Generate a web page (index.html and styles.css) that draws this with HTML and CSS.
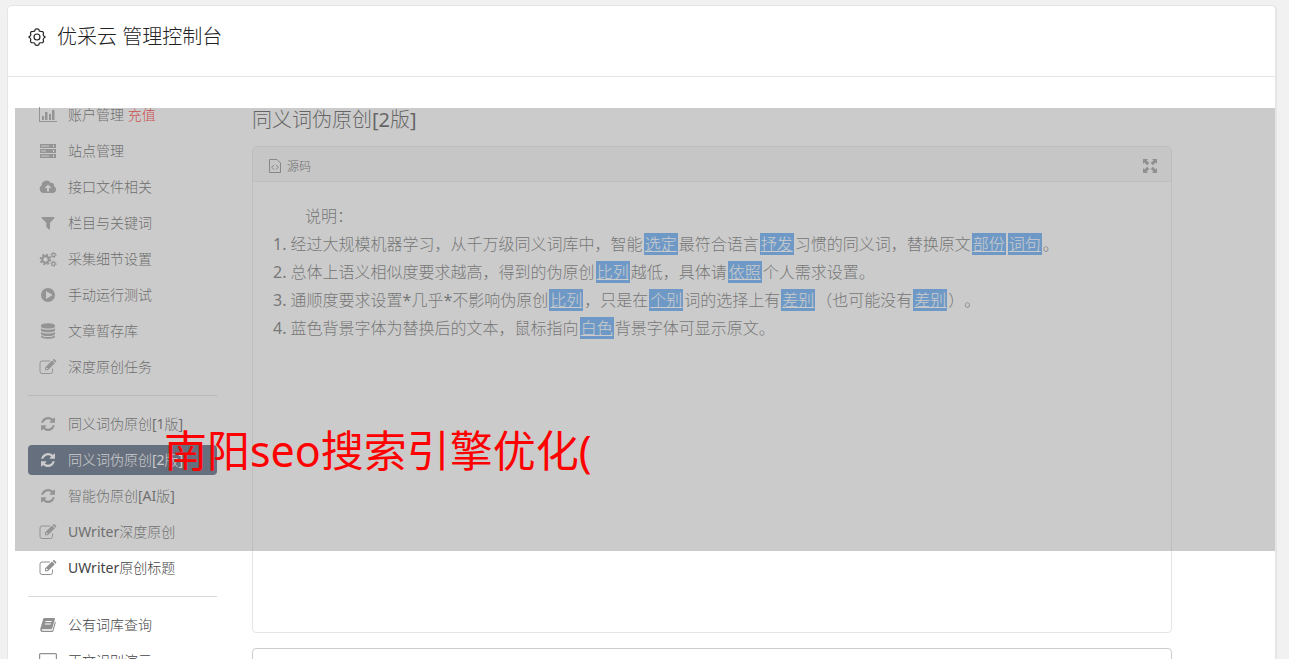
FILE: index.html
```
<!DOCTYPE html>
<html lang="zh-CN">
<head>
    <meta charset="UTF-8">
    <meta name="viewport" content="width=device-width, initial-scale=1.0">
    <title>优采云 管理控制台</title>
    <link rel="stylesheet" href="styles.css">
</head>
<body>

    <!-- 图标 -->
    <svg class="sprite" aria-hidden="true">
        <symbol id="i-refresh" viewBox="0 0 1536 1536">
            <path d="M1511 928q0 5-1 7-64 268-268 434.500T764 1536q-146 0-282.500-55T238 1324l-129 129q-19 19-45 19t-45-19-19-45V960q0-26 19-45t45-19h448q26 0 45 19t19 45-19 45l-137 137q71 66 161 102t187 36q134 0 250-65t186-179q11-17 53-117 8-23 30-23h192q13 0 22.500 9.500t9.500 22.500zm25-800v448q0 26-19 45t-45 19h-448q-26 0-45-19t-19-45 19-45l138-138Q969 256 768 256q-134 0-250 65T332 500q-11 17-53 117-8 23-30 23H50q-13 0-22.500-9.500T18 608v-7q65-268 270-434.500T768 0q146 0 284 55.500T1297 212l130-129q19-19 45-19t45 19 19 45z"/>
        </symbol>
        <symbol id="i-edit" viewBox="0 0 18 16">
            <path d="M13.500 9.500v3a2 2 0 0 1-2 2h-8.500a2 2 0 0 1-2-2v-8.500a2 2 0 0 1 2-2H11" fill="none" stroke="currentColor"/>
            <path fill-rule="evenodd" d="M6 8.500 13 1.500l2.800 2.800-7 7H6zM7 9v1.200h1.300l.6-.6L7.500 8.500zM13.700.9l.6-.6q.6-.6 1.200 0l1.500 1.500q.6.600 0 1.200l-.6.700z"/>
        </symbol>
    </svg>

    <div class="panel">
        <header class="panel-header">
            <svg class="gear" viewBox="0 0 20 20" fill="none" stroke="currentColor" stroke-width="1.300" stroke-linejoin="round">
                <path d="M8 1.500 10 .8l2 .7.6 2 1.900.3 1.900.2.900 1.500-.5 2 .8 1.400 1.500 1.100-1.500 1.300-.8 1.400.5 2-.9 1.500-1.900.2-1.900.3-.6 2-2 .7-2-.7-.6-2-1.900-.3-1.900-.2-.9-1.500.5-2-.8-1.400L.9 10l1.500-1.100.8-1.400-.5-2L3.600 4l1.900-.2 1.900-.3z"/>
                <circle cx="10" cy="10" r="3.300"/>
            </svg>
            <h1>优采云 管理控制台</h1>
        </header>

        <div class="panel-body">
            <nav class="sidebar">
                <ul>
                    <li><a href="#">
                        <svg class="icon" viewBox="0 0 18 16"><path d="M0 0h1v14h17v1H0zM3 9h2v4H3zM6 5h2.500v8H6zM10 7h2v6h-2zM13 3h2.500v10H13z"/></svg>
                        <span>账户管理 <em>充值</em></span>
                    </a></li>
                    <li><a href="#">
                        <svg class="icon" viewBox="0 0 18 16"><path fill-rule="evenodd" d="M1 1h16v4H1zM2 2.500v1h8v-1zM14 2v2h1V2zM1 6h16v4H1zM2 7.500v1h5v-1zM14 7v2h1V7zM1 11h16v4H1zM2 12.500v1h8v-1zM14 12v2h1v-2z"/></svg>
                        <span>站点管理</span>
                    </a></li>
                    <li><a href="#">
                        <svg class="icon" viewBox="0 0 18 16"><path fill-rule="evenodd" d="M4.500 14A4 4 0 0 1 2.600 6.600 4.900 4.900 0 0 1 11.700 4a2.600 2.600 0 0 1 3.300 3.300A3.500 3.500 0 0 1 14.200 14zM9 5.500 5.500 9H8v3.500h2V9h2.500z"/></svg>
                        <span>接口文件相关</span>
                    </a></li>
                    <li><a href="#">
                        <svg class="icon" viewBox="0 0 18 16"><path d="M3 2h12q.8.400.3 1.200L11 7.800v6.500q-.3.700-1 .3L7.300 12V7.800L2.700 3.200Q2.200 2.400 3 2z"/></svg>
                        <span>栏目与关键词</span>
                    </a></li>
                    <li><a href="#">
                        <svg class="icon" viewBox="0 0 18 16" fill="none" stroke="currentColor">
                            <circle cx="6.500" cy="8.500" r="3.300" stroke-width="2.200" fill="none"/>
                            <circle cx="6.500" cy="8.500" r="5" stroke-width="1.700" stroke-dasharray="2 1.927" fill="none"/>
                            <circle cx="14.500" cy="4" r="1.700" stroke-width="1.200" fill="none"/>
                            <circle cx="14.500" cy="4" r="2.700" stroke-width="1" stroke-dasharray="1.200 1.627" fill="none"/>
                            <circle cx="14.500" cy="12.800" r="1.700" stroke-width="1.200" fill="none"/>
                            <circle cx="14.500" cy="12.800" r="2.700" stroke-width="1" stroke-dasharray="1.200 1.627" fill="none"/>
                        </svg>
                        <span>采集细节设置</span>
                    </a></li>
                    <li><a href="#">
                        <svg class="icon" viewBox="0 0 18 16"><path fill-rule="evenodd" d="M9 1a7 7 0 1 1 0 14A7 7 0 0 1 9 1zM7 4.600v6.800q.2.500.8.200l5.200-3.200q.5-.4 0-.8L7.800 4.400Q7.200 4.100 7 4.600z"/></svg>
                        <span>手动运行测试</span>
                    </a></li>
                    <li><a href="#">
                        <svg class="icon" viewBox="0 0 18 16"><path d="M2 2.500C2-.5 16-.5 16 2.500v1C16 6.300 2 6.300 2 3.500zM2 5.300c3 2 11 2 14 0v1.900c0 2.800-14 2.800-14 0zM2 9c3 2 11 2 14 0v1.900c0 2.800-14 2.800-14 0zM2 12.600c3 2 11 2 14 0v1.200c0 2.800-14 2.800-14 0z"/></svg>
                        <span>文章暂存库</span>
                    </a></li>
                    <li><a href="#">
                        <svg class="icon"><use href="#i-edit"/></svg>
                        <span>深度原创任务</span>
                    </a></li>
                </ul>
                <hr>
                <ul>
                    <li><a href="#"><svg class="icon icon-sm"><use href="#i-refresh"/></svg><span>同义词伪原创[1版]</span></a></li>
                    <li><a href="#" class="active"><svg class="icon icon-sm"><use href="#i-refresh"/></svg><span>同义词伪原创[2版]</span></a></li>
                    <li><a href="#"><svg class="icon icon-sm"><use href="#i-refresh"/></svg><span>智能伪原创[AI版]</span></a></li>
                    <li><a href="#"><svg class="icon"><use href="#i-edit"/></svg><span>UWriter深度原创</span></a></li>
                    <li><a href="#"><svg class="icon"><use href="#i-edit"/></svg><span>UWriter原创标题</span></a></li>
                </ul>
                <hr>
                <ul>
                    <li><a href="#">
                        <svg class="icon" viewBox="0 0 18 16"><path fill-rule="evenodd" d="M5.500 1H15q1.200 0 .9 1.300l-2.600 8.900q-.3 1-1.300 1H3.200q-.8.300-.4 1.100.2.400.9.400h9q.7 0 .9-.6L16 4.500q1 .4.700 1.400L14.400 14q-.3 1-1.400 1H3.300Q1.400 15 1.200 12.700 1.200 12 1.500 11L4.200 2Q4.500 1 5.500 1zM6.700 4l-.3 1h6l.3-1zM6 6.400l-.3 1h6l.3-1z"/></svg>
                        <span>公有词库查询</span>
                    </a></li>
                    <li><a href="#">
                        <svg class="icon" viewBox="0 0 18 16"><path fill-rule="evenodd" d="M1.500 0h15Q18 0 18 1.500v10q0 1.500-1.500 1.500H11v2h2v1H5v-1h2v-2H1.500Q0 13 0 11.500v-10Q0 0 1.500 0zM1.200 1.200v8.600h15.600V1.200z"/></svg>
                        <span>正文识别演示</span>
                    </a></li>
                </ul>
            </nav>

            <main class="content">
                <h2>同义词伪原创[2版]</h2>
                <section class="editor">
                    <div class="toolbar">
                        <button type="button" class="tool">
                            <svg class="source" viewBox="0 0 12 14" fill="none" stroke="currentColor">
                                <path d="M.5.500h7.500l3.500 3.500v9.500H.5z"/>
                                <path d="M5 5.800 2.700 8.200 5 10.600M7 5.800l2.300 2.400L7 10.600"/>
                            </svg>
                            源码
                        </button>
                        <button type="button" class="tool" aria-label="全屏">
                            <svg class="expand" viewBox="0 0 14 14"><path d="M0 0h5L3.600 1.400l2.700 2.700-2.200 2.200-2.700-2.700L0 5zM14 0v5l-1.400-1.400-2.700 2.700-2.200-2.200 2.700-2.700L9 0zM0 14V9l1.400 1.400 2.700-2.700 2.200 2.200-2.700 2.700L5 14zM14 14H9l1.400-1.400-2.700-2.700 2.200-2.200 2.700 2.700L14 9z"/></svg>
                        </button>
                    </div>
                    <div class="editor-text">
                        <p>说明：</p>
                        <ol>
                            <li>经过大规模机器学习，从千万级同义词库中，智能<a href="#">选定</a>最符合语言<a href="#">抒发</a>习惯的同义词，替换原文<a href="#">部份</a><a href="#">词句</a>。</li>
                            <li>总体上语义相似度要求越高，得到的伪原创<a href="#">比列</a>越低，具体请<a href="#">依照</a>个人需求设置。</li>
                            <li>通顺度要求设置*几乎*不影响伪原创<a href="#">比列</a>，只是在<a href="#">个别</a>词的选择上有<a href="#">差别</a>（也可能没有<a href="#">差别</a>）。</li>
                            <li>蓝色背景字体为替换后的文本，鼠标指向<a href="#">白色</a>背景字体可显示原文。</li>
                        </ol>
                    </div>
                </section>
                <textarea class="result" aria-label="原创结果"></textarea>
            </main>

            <!-- 灰色遮罩与标题 -->
            <div class="mask">
                <p>南阳seo搜索引擎优化(</p>
            </div>
        </div>
    </div>

</body>
</html>
```
FILE: styles.css
```
* {
    box-sizing: border-box;
}

body {
    margin: 0;
    padding: 5px 12px 0 7px;
    height: 100vh;
    overflow: hidden;
    background-color: #f1f1f1;
    color: #555;
    font-family: "Noto Sans", "Noto Sans CJK SC Light", "Noto Sans CJK SC", sans-serif;
    font-weight: 400;
    font-size: 14px;
    text-spacing-trim: space-all;
}

h1, h2, p, ul, ol {
    margin: 0;
    padding: 0;
    font-weight: 400;
}

.sprite {
    display: none;
}

.panel {
    height: 100%;
    background-color: #fff;
    border: 1px solid #e5e5e5;
    border-right-width: 2px;
    border-bottom: none;
    border-radius: 5px 5px 0 0;
    overflow: hidden;
}

.panel-header {
    display: flex;
    align-items: center;
    gap: 11px;
    height: 71px;
    padding: 0 20px 8px;
    border-bottom: 1px solid #e5e5e5;
    color: #222;
}

.panel-header h1 {
    font-size: 20px;
    line-height: 30px;
}

.gear {
    width: 18px;
    height: 18px;
}

.panel-body {
    position: relative;
    display: flex;
    gap: 35px;
    padding: 23px 103px 0 20px;
}

/* 左侧菜单 */
.sidebar {
    width: 189px;
    flex: none;
}

.sidebar ul {
    display: flex;
    flex-direction: column;
    gap: 6px;
    list-style: none;
}

.sidebar hr {
    margin: 13px 0;
    border: none;
    border-top: 1px solid #d9d9d9;
}

.sidebar a {
    display: flex;
    align-items: center;
    gap: 11px;
    height: 30px;
    padding-left: 11px;
    border-radius: 4px;
    color: #444;
    text-decoration: none;
    line-height: 30px;
}

.sidebar em {
    color: #f00;
    font-style: normal;
}

.sidebar .active,
.sidebar .active .icon {
    color: #fff;
}

.sidebar .active {
    background-color: #354765;
}

.icon {
    width: 18px;
    height: 16px;
    flex: none;
    color: #909090;
    fill: currentColor;
}

.icon-sm {
    padding: 1px 2px;
}

/* 编辑区 */
.content {
    flex: 1;
}

.content h2 {
    margin: 5px 0 11px;
    color: #333;
    font-size: 20px;
    line-height: 30px;
}

.editor {
    min-height: 487px;
    border: 1px solid #e5e5e5;
    border-radius: 4px;
}

.toolbar {
    display: flex;
    justify-content: space-between;
    align-items: center;
    height: 35px;
    padding: 3px 14px 0 16px;
    background-color: #f5f5f5;
    border-bottom: 1px solid #e5e5e5;
}

.tool {
    display: flex;
    align-items: center;
    gap: 6px;
    padding: 0;
    border: none;
    background: none;
    color: #444;
    font: inherit;
    font-size: 12px;
    cursor: pointer;
}

.source {
    width: 12px;
    height: 14px;
    color: #777;
}

.expand {
    width: 14px;
    height: 14px;
    fill: #888;
}

.editor-text {
    padding: 20px;
    font-size: 16px;
    line-height: 28px;
}

.editor-text p {
    text-indent: 2em;
}

.editor-text ol {
    list-style-position: inside;
}

.editor-text a {
    margin: 0 1px;
    padding: 0 1px;
    background-color: #459bf5;
    color: #fff;
}

.result {
    display: block;
    width: 100%;
    height: 200px;
    margin-top: 15px;
    border: 1px solid #ccc;
    border-radius: 4px;
    resize: none;
}

/* 遮罩 */
.mask {
    position: absolute;
    top: 31px;
    left: 7px;
    right: 0;
    height: 443px;
    padding: 311px 0 0 149px;
    background-color: rgba(151, 151, 151, 0.5);
    pointer-events: none;
}

.mask p {
    color: #f00;
    font-family: "Noto Sans", "Noto Sans CJK SC", sans-serif;
    font-size: 43px;
    line-height: 64px;
}
```
